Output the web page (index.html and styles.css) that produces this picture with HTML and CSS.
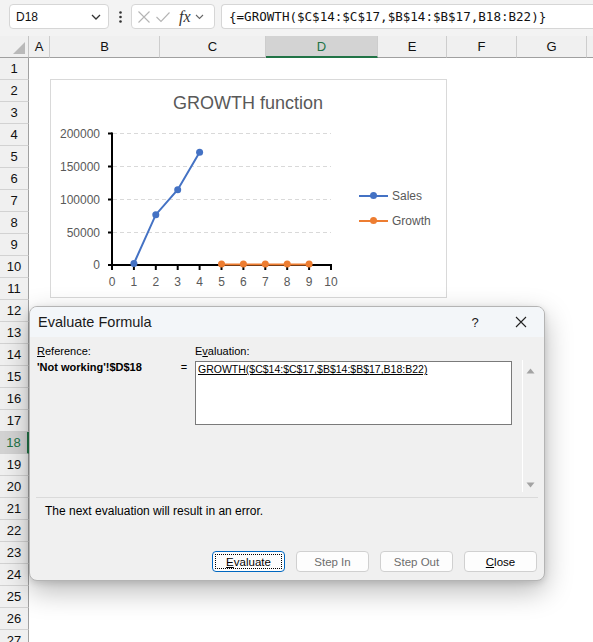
FILE: index.html
```html
<!DOCTYPE html>
<html>
<head>
<meta charset="utf-8">
<title>Evaluate Formula</title>
<link rel="stylesheet" href="styles.css">
</head>
<body>
<div class="app">
  <div class="fbar">
    <div class="namebox">
      <span>D18</span>
      <svg class="chev" width="10" height="6" viewBox="0 0 10 6"><path d="M1 1 L5 5 L9 1" fill="none" stroke="#333" stroke-width="1.3"/></svg>
    </div>
    <div class="vdots">
      <svg width="3" height="12" viewBox="0 0 3 12"><circle cx="1.5" cy="1.5" r="1.3" fill="#333"/><circle cx="1.5" cy="6" r="1.3" fill="#333"/><circle cx="1.5" cy="10.5" r="1.3" fill="#333"/></svg>
    </div>
    <div class="fxbox">
      <svg width="14" height="14" viewBox="0 0 14 14"><path d="M1.5 1.5 L12.5 12.5 M12.5 1.5 L1.5 12.5" stroke="#b4b4b4" stroke-width="1.1" fill="none"/></svg>
      <svg width="16" height="14" viewBox="0 0 16 14"><path d="M1.5 7 L6 11.5 L14.5 2.5" stroke="#b4b4b4" stroke-width="1.1" fill="none"/></svg>
      <span class="fx">fx</span>
      <svg width="9" height="6" viewBox="0 0 9 6"><path d="M1 1 L4.5 4.5 L8 1" fill="none" stroke="#666" stroke-width="1.1"/></svg>
    </div>
    <div class="formula">{=GROWTH($C$14:$C$17,$B$14:$B$17,B18:B22)}</div>
  </div>

  <div class="sheet">
    <div class="corner">
      <svg width="12" height="12" viewBox="0 0 12 12"><path d="M12 0 L12 12 L0 12 Z" fill="#b9b9b9"/></svg>
    </div>
    <div class="colheads">
      <div class="ch col-a">A</div>
      <div class="ch col-b">B</div>
      <div class="ch col-c">C</div>
      <div class="ch col-d sel">D</div>
      <div class="ch col-e">E</div>
      <div class="ch col-f">F</div>
      <div class="ch col-g">G</div>
      <div class="ch col-h"></div>
    </div>
    <div class="rowheads">
      <div class="rh">1</div><div class="rh">2</div><div class="rh">3</div><div class="rh">4</div>
      <div class="rh">5</div><div class="rh">6</div><div class="rh">7</div><div class="rh">8</div>
      <div class="rh">9</div><div class="rh">10</div><div class="rh">11</div><div class="rh">12</div>
      <div class="rh">13</div><div class="rh">14</div><div class="rh">15</div><div class="rh">16</div>
      <div class="rh">17</div><div class="rh sel">18</div><div class="rh">19</div><div class="rh">20</div>
      <div class="rh">21</div><div class="rh">22</div><div class="rh">23</div><div class="rh">24</div>
      <div class="rh">25</div><div class="rh">26</div><div class="rh">27</div>
    </div>
    <div class="cells"></div>
  </div>

  <div class="chart">
    <svg width="397" height="219" viewBox="0 0 397 219">
      <text class="ctitle" x="198" y="30" text-anchor="middle">GROWTH function</text>
      <g stroke="#d9d9d9" stroke-width="1" stroke-dasharray="4 3">
        <line x1="63" y1="54.5" x2="281" y2="54.5"/>
        <line x1="63" y1="87.5" x2="281" y2="87.5"/>
        <line x1="63" y1="120.5" x2="281" y2="120.5"/>
        <line x1="63" y1="153.5" x2="281" y2="153.5"/>
      </g>
      <g stroke="#000" stroke-width="2">
        <line x1="62" y1="53.5" x2="62" y2="187"/>
        <line x1="61" y1="186" x2="282" y2="186"/>
        <line x1="58" y1="54.5" x2="62" y2="54.5"/>
        <line x1="58" y1="87.5" x2="62" y2="87.5"/>
        <line x1="58" y1="120.5" x2="62" y2="120.5"/>
        <line x1="58" y1="153.5" x2="62" y2="153.5"/>
        <line x1="58" y1="186" x2="62" y2="186"/>
        <line x1="62" y1="186" x2="62" y2="191"/>
        <line x1="83.9" y1="186" x2="83.9" y2="191"/>
        <line x1="105.8" y1="186" x2="105.8" y2="191"/>
        <line x1="127.7" y1="186" x2="127.7" y2="191"/>
        <line x1="149.6" y1="186" x2="149.6" y2="191"/>
        <line x1="171.5" y1="186" x2="171.5" y2="191"/>
        <line x1="193.4" y1="186" x2="193.4" y2="191"/>
        <line x1="215.3" y1="186" x2="215.3" y2="191"/>
        <line x1="237.2" y1="186" x2="237.2" y2="191"/>
        <line x1="259.1" y1="186" x2="259.1" y2="191"/>
        <line x1="281" y1="186" x2="281" y2="191"/>
      </g>
      <g class="axl" text-anchor="end">
        <text x="50" y="58.5">200000</text>
        <text x="50" y="91.5">150000</text>
        <text x="50" y="124.5">100000</text>
        <text x="50" y="157.5">50000</text>
        <text x="50" y="190">0</text>
      </g>
      <g class="axl" text-anchor="middle">
        <text x="62" y="207">0</text>
        <text x="83.9" y="207">1</text>
        <text x="105.8" y="207">2</text>
        <text x="127.7" y="207">3</text>
        <text x="149.6" y="207">4</text>
        <text x="171.5" y="207">5</text>
        <text x="193.4" y="207">6</text>
        <text x="215.3" y="207">7</text>
        <text x="237.2" y="207">8</text>
        <text x="259.1" y="207">9</text>
        <text x="281" y="207">10</text>
      </g>
      <polyline points="83.9,184.5 105.8,135.7 127.7,110.7 149.6,73.3" fill="none" stroke="#4472c4" stroke-width="2"/>
      <g fill="#4472c4">
        <circle cx="83.9" cy="184.5" r="3.5"/>
        <circle cx="105.8" cy="135.7" r="3.5"/>
        <circle cx="127.7" cy="110.7" r="3.5"/>
        <circle cx="149.6" cy="73.3" r="3.5"/>
      </g>
      <polyline points="171.5,185.5 259.1,185.5" fill="none" stroke="#ed7d31" stroke-width="2"/>
      <g fill="#ed7d31">
        <circle cx="171.5" cy="185" r="3.5"/>
        <circle cx="193.4" cy="185" r="3.5"/>
        <circle cx="215.3" cy="185" r="3.5"/>
        <circle cx="237.2" cy="185" r="3.5"/>
        <circle cx="259.1" cy="185" r="3.5"/>
      </g>
      <line x1="309" y1="117" x2="338" y2="117" stroke="#4472c4" stroke-width="2"/>
      <circle cx="323.5" cy="116.5" r="3.5" fill="#4472c4"/>
      <text class="leg" x="342" y="121">Sales</text>
      <line x1="309" y1="142" x2="338" y2="142" stroke="#ed7d31" stroke-width="2"/>
      <circle cx="323.5" cy="141.5" r="3.5" fill="#ed7d31"/>
      <text class="leg" x="342" y="146">Growth</text>
    </svg>
  </div>

  <div class="dialog">
    <div class="dtitle">
      <span class="dtitle-text">Evaluate Formula</span>
      <span class="help">?</span>
      <span class="dclose">
        <svg width="12" height="12" viewBox="0 0 12 12"><path d="M1 1 L11 11 M11 1 L1 11" stroke="#222" stroke-width="1.1" fill="none"/></svg>
      </span>
    </div>
    <div class="dbody">
      <div class="dtop">
        <div class="refcol">
          <div class="lbl"><u>R</u>eference:</div>
          <div class="refval">'Not working'!$D$18</div>
        </div>
        <div class="eq">=</div>
        <div class="evalcol">
          <div class="lbl">E<u>v</u>aluation:</div>
          <div class="evalbox"><u>GROWTH($C$14:$C$17,$B$14:$B$17,B18:B22)</u></div>
        </div>
        <div class="scroll">
          <svg width="9" height="6" viewBox="0 0 9 6"><path d="M4.5 0.5 L8.5 5.5 L0.5 5.5 Z" fill="#a3a3a3"/></svg>
          <svg width="9" height="6" viewBox="0 0 9 6"><path d="M0.5 0.5 L8.5 0.5 L4.5 5.5 Z" fill="#a3a3a3"/></svg>
        </div>
      </div>
      <div class="sep"></div>
      <div class="msg">The next evaluation will result in an error.</div>
      <div class="btns">
        <div class="btn focus"><span class="focusring"><u>E</u>valuate</span></div>
        <div class="btn dis">Step In</div>
        <div class="btn dis">Step Out</div>
        <div class="btn"><u>C</u>lose</div>
      </div>
    </div>
  </div>
</div>
</body>
</html>
```

FILE: styles.css
```css
html, body {
  margin: 0;
  padding: 0;
  background: #ffffff;
}
body {
  font-family: "Liberation Sans", Arial, sans-serif;
  color: #000;
}
.app {
  position: relative;
  width: 593px;
  height: 642px;
  overflow: hidden;
  background: #ffffff;
}

/* formula bar */
.fbar {
  height: 36px;
  box-sizing: border-box;
  padding-top: 4px;
  background: #f3f3f3;
  display: flex;
  align-items: flex-start;
}
.namebox {
  margin-left: 9px;
  width: 100px;
  height: 25px;
  box-sizing: border-box;
  background: #fff;
  border: 1px solid #d6d6d6;
  border-radius: 4px;
  display: flex;
  align-items: center;
  justify-content: space-between;
  padding: 0 7px 0 6px;
  font-size: 12px;
  color: #111;
}
.vdots {
  width: 22px;
  height: 25px;
  display: flex;
  align-items: center;
  justify-content: center;
}
.fxbox {
  width: 84px;
  height: 25px;
  box-sizing: border-box;
  background: #fff;
  border: 1px solid #d6d6d6;
  border-radius: 4px;
  display: flex;
  align-items: center;
  gap: 4px;
  padding-left: 5px;
}
.fx {
  font-family: "Liberation Serif", "Times New Roman", serif;
  font-style: italic;
  font-size: 16px;
  color: #333;
  margin-left: 4px;
  line-height: 1;
}
.formula {
  margin-left: 6px;
  flex: 1;
  height: 25px;
  box-sizing: border-box;
  background: #fff;
  border: 1px solid #d6d6d6;
  border-right: none;
  border-radius: 4px 0 0 4px;
  font-family: "DejaVu Sans Mono", "Liberation Mono", monospace;
  font-size: 12.55px;
  line-height: 23px;
  padding-left: 7px;
  white-space: nowrap;
  color: #111;
}

/* sheet */
.sheet {
  display: grid;
  grid-template-columns: 29px 1fr;
  grid-template-rows: 22px auto;
}
.corner {
  box-sizing: border-box;
  background: #f0f0f0;
  border-right: 1px solid #c4c4c4;
  border-bottom: 1px solid #a0a0a0;
  display: flex;
  align-items: flex-end;
  justify-content: flex-end;
  padding: 0 3px 3px 0;
}
.colheads {
  display: flex;
  background: #f0f0f0;
}
.ch {
  box-sizing: border-box;
  height: 22px;
  border-right: 1px solid #cdcdcd;
  border-bottom: 1px solid #a0a0a0;
  display: flex;
  align-items: center;
  justify-content: center;
  font-size: 13px;
  color: #111;
}
.col-a { width: 21px; }
.col-b { width: 110px; }
.col-c { width: 106px; }
.col-d { width: 112px; }
.col-e { width: 69px; }
.col-f { width: 70px; }
.col-g { width: 70px; }
.col-h { flex: 1; border-right: none; }
.ch.sel {
  background: #d3d3d3;
  color: #217346;
  border-bottom: 2px solid #217346;
}
.rowheads {
  display: flex;
  flex-direction: column;
  background: #f0f0f0;
}
.rh {
  box-sizing: border-box;
  height: 22px;
  border-right: 1px solid #a0a0a0;
  border-bottom: 1px solid #d2d2d2;
  display: flex;
  align-items: center;
  justify-content: center;
  font-size: 13px;
  color: #111;
}
.rh.sel {
  background: #d3d3d3;
  color: #217346;
  border-right: 2px solid #217346;
}
.cells {
  background: #fff;
}

/* chart */
.chart {
  position: absolute;
  left: 50px;
  top: 79px;
  width: 397px;
  height: 219px;
  box-sizing: border-box;
  border: 1px solid #d9d9d9;
  background: #fff;
}
.chart svg {
  display: block;
  margin: -1px 0 0 -1px;
}
.ctitle {
  font-family: "Liberation Sans", Arial, sans-serif;
  font-size: 18px;
  fill: #595959;
}
.axl text {
  font-family: "Liberation Sans", Arial, sans-serif;
  font-size: 12px;
  fill: #595959;
}
.leg {
  font-family: "Liberation Sans", Arial, sans-serif;
  font-size: 12px;
  fill: #595959;
}

/* dialog */
.dialog {
  position: absolute;
  left: 29px;
  top: 306px;
  width: 516px;
  height: 275px;
  box-sizing: border-box;
  border: 1px solid #b4b4b4;
  border-radius: 8px;
  background: #f0f0f0;
  box-shadow: 0 10px 28px rgba(0, 0, 0, 0.28), 0 2px 6px rgba(0, 0, 0, 0.12);
  display: flex;
  flex-direction: column;
  overflow: hidden;
}
.dtitle {
  height: 30px;
  flex: none;
  background: #f3f6f9;
  display: flex;
  align-items: center;
  padding-left: 8px;
}
.dtitle-text {
  font-size: 14.5px;
  color: #1a1a1a;
  flex: 1;
}
.help {
  font-size: 13px;
  color: #1a1a1a;
  width: 12px;
  text-align: center;
  margin-right: 34px;
}
.dclose {
  width: 12px;
  height: 12px;
  margin-right: 17px;
  display: flex;
}
.dbody {
  flex: 1;
  display: flex;
  flex-direction: column;
  font-size: 11px;
  color: #000;
}
.dtop {
  height: 155px;
  display: flex;
  padding-left: 7px;
  box-sizing: border-box;
}
.refcol {
  width: 140px;
  padding-top: 7px;
}
.lbl {
  height: 15px;
  line-height: 15px;
}
.refval {
  font-weight: bold;
  line-height: 14px;
  margin-top: 1px;
}
.eq {
  width: 14px;
  text-align: center;
  padding-top: 23px;
  line-height: 14px;
}
.evalcol {
  margin-left: 4px;
  width: 317px;
  padding-top: 7px;
}
.evalcol .lbl {
  margin-bottom: 2px;
}
.evalbox {
  height: 64px;
  box-sizing: border-box;
  border: 1px solid #7a7a7a;
  background: #fff;
  font-size: 10.5px;
  line-height: 13px;
  padding: 1px 2px;
  color: #000;
}
.scroll {
  margin-left: 10px;
  width: 15px;
  margin-top: 23px;
  border-left: 1px solid #ffffff;
  display: flex;
  flex-direction: column;
  justify-content: space-between;
  align-items: center;
  padding: 8px 0 4px 0;
  box-sizing: border-box;
}
.sep {
  height: 1px;
  background: #dadada;
  margin: 5px 6px 0 6px;
}
.msg {
  padding-left: 15px;
  margin-top: 6px;
  line-height: 14px;
  font-size: 12px;
}
.btns {
  margin-top: auto;
  display: flex;
  justify-content: flex-end;
  gap: 11px;
  padding: 0 7px 8px 0;
}
.btn {
  width: 73px;
  height: 21px;
  box-sizing: border-box;
  background: #fdfdfd;
  border: 1px solid #d0d0d0;
  border-radius: 4px;
  display: flex;
  align-items: center;
  justify-content: center;
  font-size: 11.5px;
  color: #000;
}
.btn.dis {
  color: #6d6d6d;
}
.btn.focus {
  border-color: #0067c0;
  padding: 2px;
}
.focusring {
  flex: 1;
  align-self: stretch;
  border: 1px dotted #000;
  display: flex;
  align-items: center;
  justify-content: center;
}
```
